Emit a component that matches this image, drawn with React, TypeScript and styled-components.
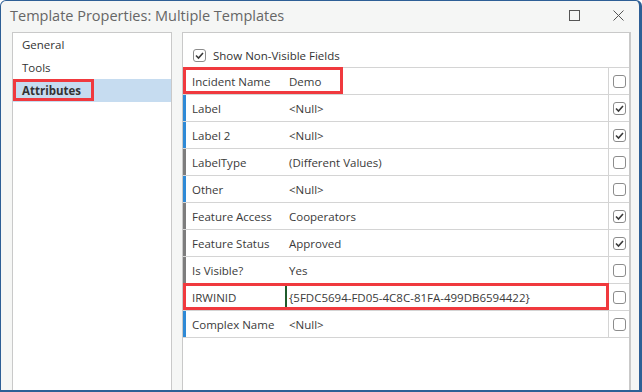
import styled, { createGlobalStyle } from "styled-components";

interface Field {
  name: string;
  value: string;
  bar: "blue" | "gray" | "none";
  checked: boolean;
  mark?: number;
  editing?: boolean;
}

const fields: Field[] = [
  { name: "Incident Name", value: "Demo", bar: "none", checked: false, mark: 160 },
  { name: "Label", value: "<Null>", bar: "blue", checked: true },
  { name: "Label 2", value: "<Null>", bar: "blue", checked: true },
  { name: "LabelType", value: "(Different Values)", bar: "gray", checked: false },
  { name: "Other", value: "<Null>", bar: "blue", checked: false },
  { name: "Feature Access", value: "Cooperators", bar: "gray", checked: true },
  { name: "Feature Status", value: "Approved", bar: "gray", checked: true },
  { name: "Is Visible?", value: "Yes", bar: "gray", checked: false },
  {
    name: "IRWINID",
    value: "{5FDC5694-FD05-4C8C-81FA-499DB6594422}",
    bar: "blue",
    checked: false,
    mark: 426,
    editing: true,
  },
  { name: "Complex Name", value: "<Null>", bar: "blue", checked: false },
];

const navItems = ["General", "Tools", "Attributes"];

const Check = ({ checked }: { checked: boolean }) => (
  <Box>
    {checked && (
      <svg width="11" height="11" viewBox="0 0 11 11">
        <polyline
          points="2,5.5 4.5,8 9,3"
          fill="none"
          stroke="#3a3a3a"
          strokeWidth="1.6"
        />
      </svg>
    )}
  </Box>
);

export default function App() {
  return (
    <>
      <GlobalStyle />
      <Window>
        <TitleBar>
          <Title>Template Properties: Multiple Templates</Title>
          <Controls>
            <svg width="11" height="11" viewBox="0 0 11 11">
              <rect x="0.5" y="0.5" width="10" height="10" fill="none" stroke="#555" />
            </svg>
            <svg width="11" height="11" viewBox="0 0 11 11">
              <path d="M0.5 0.5 L10.5 10.5 M10.5 0.5 L0.5 10.5" stroke="#555" strokeWidth="1" />
            </svg>
          </Controls>
        </TitleBar>
        <Body>
          <Nav>
            {navItems.map((item) => (
              <NavItem key={item} $selected={item === "Attributes"}>
                {item === "Attributes" ? <NavMark>{item}</NavMark> : item}
              </NavItem>
            ))}
          </Nav>
          <Panel>
            <Toolbar>
              <Check checked />
              <span>Show Non-Visible Fields</span>
            </Toolbar>
            <Table>
              {fields.map((f) => (
                <Row key={f.name}>
                  <Bar $kind={f.bar} />
                  <NameCell>{f.name}</NameCell>
                  <ValueCell $editing={f.editing}>{f.value}</ValueCell>
                  <CheckCell>
                    <Check checked={f.checked} />
                  </CheckCell>
                  {f.mark && <RowMark style={{ width: f.mark }} />}
                </Row>
              ))}
            </Table>
          </Panel>
        </Body>
      </Window>
    </>
  );
}

const GlobalStyle = createGlobalStyle`
  body {
    margin: 0;
    font-family: "Open Sans", "Noto Sans", sans-serif;
  }
`;

const Window = styled.div`
  width: 642px;
  height: 392px;
  box-sizing: border-box;
  border: 1px solid #2e5f96;
  border-right-width: 3px;
  border-bottom-width: 2px;
  border-radius: 6px 6px 0 0;
  background: #f5f6f5;
  display: flex;
  flex-direction: column;
  overflow: hidden;
`;

const TitleBar = styled.div`
  height: 31px;
  display: flex;
  align-items: center;
  padding-left: 9px;
  padding-right: 15px;
`;

const Title = styled.div`
  flex: 1;
  font-size: 14.5px;
  color: #666;
  padding-bottom: 2px;
`;

const Controls = styled.div`
  display: flex;
  gap: 33px;
  align-items: center;
  padding-bottom: 2px;
`;

const Body = styled.div`
  flex: 1;
  display: flex;
  gap: 10px;
  padding: 0 8px 0 11px;
  min-height: 0;
`;

const Nav = styled.div`
  width: 158px;
  border: 1px solid #c9c9c9;
  border-bottom: none;
  background: #fff;
  padding-top: 0;
`;

const NavItem = styled.div<{ $selected?: boolean }>`
  height: 22px;
  display: flex;
  align-items: center;
  padding-left: ${(p) => (p.$selected ? "0" : "9px")};
  padding-bottom: 1px;
  font-size: 11.5px;
  color: #333;
  background: ${(p) => (p.$selected ? "#c6dcf0" : "transparent")};
  font-weight: ${(p) => (p.$selected ? 700 : 400)};
`;

const NavMark = styled.span`
  height: 100%;
  width: 81px;
  box-sizing: border-box;
  border: 3px solid #f0393e;
  display: flex;
  align-items: center;
  padding-left: 6px;
`;

const Panel = styled.div`
  flex: 1;
  border: 1px solid #c9c9c9;
  border-right-width: 2px;
  border-bottom: none;
  background: #fff;
  display: flex;
  flex-direction: column;
`;

const Toolbar = styled.div`
  height: 34px;
  display: flex;
  align-items: center;
  gap: 7px;
  padding: 10px 0 0 10px;
  box-sizing: border-box;
  font-size: 11.5px;
  color: #333;
`;

const Table = styled.div`
  border-top: 1px solid #d4d4d4;
`;

const Row = styled.div`
  position: relative;
  height: 26px;
  display: flex;
  border-bottom: 1px solid #d4d4d4;
  font-size: 11.5px;
  color: #3a3a3a;
`;

const Bar = styled.div<{ $kind: "blue" | "gray" | "none" }>`
  width: 3px;
  background: ${(p) =>
    p.$kind === "blue" ? "#2f8ad6" : p.$kind === "gray" ? "#7d7d7d" : "transparent"};
`;

const NameCell = styled.div`
  width: 93px;
  padding-left: 6px;
  display: flex;
  align-items: center;
  white-space: nowrap;
`;

const ValueCell = styled.div<{ $editing?: boolean }>`
  flex: 1;
  display: flex;
  align-items: center;
  padding-left: ${(p) => (p.$editing ? "2px" : "4px")};
  border-left: ${(p) => (p.$editing ? "2px solid #1f5c2c" : "none")};
  white-space: nowrap;
`;

const CheckCell = styled.div`
  width: 20px;
  border-left: 1px solid #d4d4d4;
  display: flex;
  align-items: center;
  justify-content: center;
`;

const Box = styled.div`
  width: 13px;
  height: 13px;
  box-sizing: border-box;
  border: 1px solid #8c8c8c;
  border-radius: 3px;
  background: #fff;
  display: flex;
  align-items: center;
  justify-content: center;
`;

const RowMark = styled.div`
  position: absolute;
  left: 0;
  top: -1px;
  bottom: 0;
  box-sizing: border-box;
  border: 3px solid #f0393e;
  pointer-events: none;
`;
